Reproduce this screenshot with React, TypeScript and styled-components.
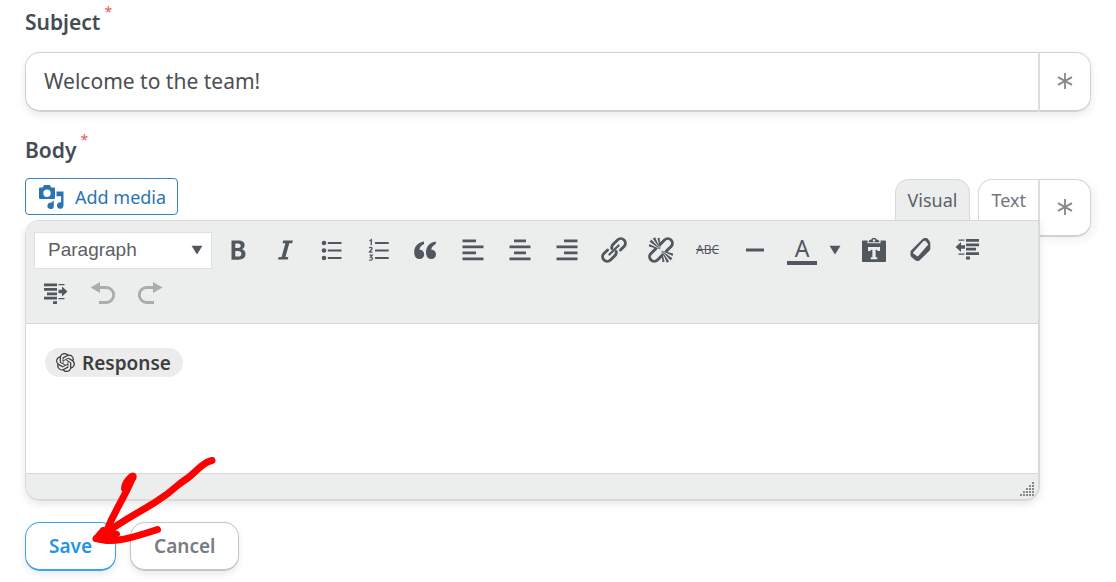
import React from "react";
import styled, { createGlobalStyle } from "styled-components";
import { SiOpenai } from "react-icons/si";

const ui = '"Noto Sans", "Open Sans", sans-serif';
const ink = "#50575e";
const line = "#d8dada";
const panel = "#eceeee";

const GlobalStyle = createGlobalStyle`
  *, *::before, *::after { box-sizing: border-box; }
  body { margin: 0; background: #fff; font-family: ${ui}; color: #454c54; }
  button, input, select { font-family: inherit; margin: 0; }
`;

const Form = styled.form`
  padding: 8px 25px 12px;
`;

const Label = styled.label`
  display: flex;
  align-items: flex-start;
  gap: 4px;
  height: 28px;
  font-size: 21px;
  line-height: 28px;
  font-weight: 600;
`;

const Required = styled.span`
  font-size: 14px;
  line-height: 8px;
  font-weight: 400;
  color: #f0555a;
`;

const SubjectField = styled.div`
  display: flex;
  height: 60px;
  margin: 16px 0 24px;
  border-radius: 15px;
  box-shadow: 0 3px 8px rgba(0, 0, 0, 0.09);
`;

const SubjectInput = styled.input`
  flex: 1;
  min-width: 0;
  padding: 0 18px 2px;
  border: 1px solid #d0d2d2;
  border-bottom-width: 2px;
  border-right: 0;
  border-radius: 15px 0 0 15px;
  background: #fff;
  color: #4b4f54;
  font-size: 21px;
  outline: 0;
`;

const TagButton = styled.button<{ $height: number }>`
  display: flex;
  align-items: center;
  justify-content: center;
  flex: none;
  width: 53px;
  height: ${(p) => p.$height}px;
  padding: 0 0 2px;
  border: 1px solid #d0d2d2;
  border-bottom-width: 2px;
  border-left: 2px solid #dcdede;
  border-radius: 0 15px 15px 0;
  background: #fff;
  color: #85878a;
`;

const BodyField = styled.div`
  display: flex;
  align-items: flex-start;
  margin-top: 14px;
`;

const EditorColumn = styled.div`
  flex: 1;
  min-width: 0;
  z-index: 1;
`;

const BodyTag = styled(TagButton)`
  margin-top: 1px;
  box-shadow: 4px 3px 8px rgba(0, 0, 0, 0.06);
`;

const EditorHead = styled.div`
  display: flex;
  align-items: flex-start;
  height: 42px;
`;

const MediaButton = styled.button`
  display: flex;
  align-items: center;
  gap: 10px;
  height: 37px;
  padding: 0 11px 0 12px;
  border: 1px solid #3582c4;
  border-radius: 4px;
  background: #fff;
  color: #2a74b5;
  font-size: 18px;
`;

const Tabs = styled.div`
  display: flex;
  align-self: flex-end;
  gap: 8px;
  margin-left: auto;
  z-index: 1;
`;

const Tab = styled.button<{ $active?: boolean }>`
  height: 41px;
  margin-bottom: ${(p) => (p.$active ? -1 : 0)}px;
  padding: 0 12px;
  border: 1px solid ${line};
  border-width: ${(p) => (p.$active ? "1px 1px 0" : "1px 0 0 1px")};
  border-radius: ${(p) => (p.$active ? "14px 14px 0 0" : "14px 0 0 0")};
  background: ${(p) => (p.$active ? panel : "#fff")};
  color: ${(p) => (p.$active ? "#5a6168" : "#70767c")};
  font-size: 18px;
`;

const Editor = styled.div`
  overflow: hidden;
  margin-right: -2px;
  border: 1px solid ${line};
  border-right-width: 2px;
  border-bottom-width: 2px;
  border-radius: 15px 0 15px 15px;
  background: #fff;
  box-shadow: 0 3px 8px rgba(0, 0, 0, 0.1);
`;

const Toolbar = styled.div`
  display: flex;
  flex-wrap: wrap;
  padding: 7px 6px 8px;
  border-bottom: 1px solid ${line};
  background: ${panel};
`;

const SelectBox = styled.div`
  display: grid;
  align-items: center;
  height: 44px;
  margin: 0 2px;
  color: ${ink};
  > * { grid-area: 1 / 1; }
  > svg { justify-self: end; margin-right: 9px; pointer-events: none; }
`;

const FormatSelect = styled.select`
  appearance: none;
  width: 178px;
  height: 37px;
  padding: 0 32px 2px 13px;
  border: 1px solid #dfe1e1;
  border-radius: 0;
  background: #fff;
  color: #5b6066;
  font-family: "Liberation Sans", sans-serif;
  font-size: 19px;
`;

const Tool = styled.button<{ $wide?: boolean }>`
  display: flex;
  align-items: center;
  justify-content: center;
  gap: 12px;
  width: ${(p) => (p.$wide ? 72 : 47)}px;
  height: 43px;
  padding: 0;
  border: 0;
  background: transparent;
  color: ${ink};
  &:disabled { color: #a9adb0; }
`;

const Content = styled.div`
  height: 149px;
  padding: 24px 19px;
  outline: 0;
`;

const Chip = styled.span`
  display: inline-flex;
  align-items: center;
  gap: 7px;
  height: 29px;
  padding: 0 12px 0 11px;
  border-radius: 15px;
  background: #ececec;
  color: #3c3e40;
  font-size: 19px;
  font-weight: 600;
`;

const StatusBar = styled.div`
  display: flex;
  align-items: flex-end;
  justify-content: flex-end;
  height: 26px;
  padding: 3px 4px;
  border-top: 1px solid ${line};
  background: ${panel};
`;

const Actions = styled.div`
  position: relative;
  z-index: 2;
  display: flex;
  gap: 14px;
  margin-top: 21px;
`;

const ActionButton = styled.button<{ $primary?: boolean }>`
  height: 49px;
  padding: 0 23px;
  border: 1px solid ${(p) => (p.$primary ? "#3ba2ee" : "#c3c5c6")};
  border-bottom-width: 2px;
  border-radius: 15px;
  background: #fff;
  box-shadow: 0 3px 7px rgba(0, 0, 0, 0.09);
  color: ${(p) => (p.$primary ? "#2295e8" : "#767c83")};
  font-size: 19px;
  font-weight: 600;
`;

const ArrowMark = styled.svg`
  position: absolute;
  left: 65px;
  top: -67px;
  pointer-events: none;
`;

const Icon = ({ children }: { children: React.ReactNode }) => (
  <svg width="30" height="30" viewBox="0 0 30 30" fill="currentColor" aria-hidden="true">
    {children}
  </svg>
);

const Asterisk = () => (
  <svg width="18" height="18" viewBox="0 0 18 18" stroke="currentColor" strokeWidth="1.8" aria-hidden="true">
    <path d="M9 1v16M2 5.1l14 7.8M16 5.1L2 12.9" />
  </svg>
);

const Caret = () => (
  <svg width="12" height="10" viewBox="0 0 12 10" fill="currentColor" aria-hidden="true">
    <path d="M.5.8h11L6 9.6z" />
  </svg>
);

const MediaIcon = () => (
  <svg width="27" height="26" viewBox="0 0 27 26" fill="currentColor" aria-hidden="true">
    <path fillRule="evenodd" d="M2 3.600h2.600L6.200 1h5.600l1.600 2.600H16a1 1 0 0 1 1 1V14a1 1 0 0 1-1 1H2a1 1 0 0 1-1-1V4.600a1 1 0 0 1 1-1zM9 5.600a3.700 3.700 0 1 0 0 7.400 3.700 3.700 0 0 0 0-7.400z" />
    <path d="M18.500 7.500H25.500V21.500a3.300 3.300 0 1 1-2.400-3.200V12.200h-4.600zM15.800 16.200v6a3.200 3.200 0 1 1-2.500-3.500z" />
  </svg>
);

const icons = {
  bold: <path fillRule="evenodd" d="M8.500 5.500h6.800c4 0 6.300 1.500 6.300 4.600 0 2.200-1.200 3.700-3 4.200 2.400.5 3.900 2 3.900 4.700 0 3.700-2.800 5.700-7 5.700h-7zM12.300 8.500v4.400h2.600c1.800 0 2.800-.7 2.800-2.200s-1-2.200-2.800-2.200zM12.300 15.900v5.700h3c2 0 3.100-1 3.100-2.900 0-1.800-1.200-2.800-3.200-2.800z" />,
  italic: <path d="M13.200 5.500h9.700l-.7 2.700h-2.900l-3.800 13.700h2.900l-.7 2.700H8l.7-2.700h2.900l3.800-13.700h-2.900z" />,
  bullets: (
    <>
      <circle cx="7" cy="8" r="2.300" /><circle cx="7" cy="15.500" r="2.300" /><circle cx="7" cy="23" r="2.300" />
      <path d="M10.800 7h13.700v2H10.800zM10.800 14.500h13.700v2H10.800zM10.800 22h13.700v2H10.800z" />
    </>
  ),
  numbers: (
    <>
      <path d="M11 7h13.700v2H11zM11 14.500h13.700v2H11zM11 22h13.700v2H11z" />
      <path fill="none" stroke="currentColor" strokeWidth="1.300" d="M5.500 6L7.300 4.800v5.400M5.400 13.200c.4-1.200 2.800-1.200 2.800.3 0 1.200-2.800 2.600-2.800 3.600h3.200M5.500 20.200h2.700l-1.600 2c2.600 0 2.400 3-.1 3-.6 0-1-.1-1.300-.3" />
    </>
  ),
  quote: (
    <path d="M13 6.500c-6 1-9.800 5-9.800 10.700 0 4.200 2 6.900 5.200 6.900 2.800 0 4.800-2 4.800-4.700s-1.900-4.600-4.700-4.600c.1-2.500 1.700-4.400 4.500-5.800zM24.800 6.500c-6 1-9.800 5-9.800 10.700 0 4.200 2 6.900 5.200 6.900 2.800 0 4.800-2 4.800-4.700s-1.900-4.600-4.700-4.600c.1-2.500 1.700-4.400 4.500-5.800z" />
  ),
  left: <path d="M4.500 4.500H18v2.800H4.500zM4.500 10.500h21v2.800h-21zM4.500 16.500H18v2.800H4.500zM4.500 22.500h21v2.800h-21z" />,
  center: <path d="M9 4.500h12v2.800H9zM4.500 10.500h21v2.800h-21zM9 16.500h12v2.800H9zM4.500 22.500h21v2.800h-21z" />,
  right: <path d="M12 4.500h13.500v2.800H12zM4.500 10.500h21v2.800h-21zM12 16.500h13.500v2.800H12zM4.500 22.500h21v2.800h-21z" />,
  link: (
    <g fill="none" stroke="currentColor" strokeWidth="2.900" strokeLinecap="round" transform="translate(15 15) rotate(-45)">
      <path d="M-.5-2.500A4.600 4.600 0 0 1 2.500-4.600H9.600a4.600 4.600 0 0 1 0 9.200H4.500" />
      <path d="M.5 2.500A4.600 4.600 0 0 1-2.500 4.600H-9.600a4.600 4.600 0 0 1 0-9.200H-4.500" />
      <path d="M-6.500 0h13" strokeWidth="2.200" />
    </g>
  ),
  unlink: (
    <>
      <g fill="none" stroke="currentColor" strokeWidth="2.900" strokeLinecap="round" transform="translate(15 15) rotate(-45)">
        <path d="M3-4.600H9.600a4.600 4.600 0 0 1 0 9.200H3" />
        <path d="M-3 4.600H-9.600a4.600 4.600 0 0 1 0-9.200H-3" />
      </g>
      <path d="M14.500 14.500L2.800 11.400l.6-2.300zM14.500 14.500L3.600 6.800l1.800-2.300zM14.500 14.500L6.800 3.600l2.300-1.400zM14.500 14.500L11.400 3.300l2.200-.6zM15.500 15.500l11.700 3.100-.6 2.300zM15.500 15.500l10.900 7.700-1.800 2.300zM15.500 15.500l7.700 10.900-2.300 1.400zM15.500 15.500l3.100 11.200-2.200.6z" />
    </>
  ),
  rule: <path d="M6 13.600h18v2.800H6z" />,
  paste: (
    <path fillRule="evenodd" d="M4 5.500h4.500v2.800h13V5.500H26a1 1 0 0 1 1 1V26a1 1 0 0 1-1 1H4a1 1 0 0 1-1-1V6.500a1 1 0 0 1 1-1zM9.500 7.200c0-2 1.300-2.500 3-2.800C12.600 3.300 13.600 3 15 3s2.400.3 2.500 1.400c1.700.3 3 .8 3 2.800zM15 4.200a1.200 1.200 0 1 0 0 2.400 1.200 1.200 0 0 0 0-2.400zM9 12v4h2.600v-1.300h1.800v7.600h-1.700v2h6.600v-2h-1.700v-7.600h1.800V16H21v-4z" />
  ),
  eraser: (
    <path fillRule="evenodd" d="M16.300 4.300C17.200 3.400 18.400 3 19.600 3c1.200 0 2 .4 2.600 1.200l1.500 2.200c.5.6.6 1.200.6 2v5.200c0 .9-.3 1.600-.9 2.200L14 25c-.7.8-1.500 1-2.500 1s-1.800-.3-2.500-.9l-3.600-3c-.6-.5-.9-1.200-.9-2v-3c0-.8.3-1.300.8-1.800zM17.200 6.300L7.300 17.200c-.4.4-.4.8 0 1.200l3.600 2.600c.5.4 1 .3 1.400-.1L21.800 10c.4-.4.4-.9.1-1.300L19.800 6.200c-.7-.7-1.900-.6-2.600.1z" />
  ),
  outdent: (
    <path d="M13 4h13v2.800H13zM13 8.400h13v2.800H13zM13 12.800h10v2.800H13zM13 17.200h13V20H13zM13 21.600h4v2.800h-4zM5.500 4.500h6v1.200h-6zM5.500 18.500h6v1.200h-6zM2.500 12l5.500-5v3.200h4v3.600H8V17z" />
  ),
  indent: (
    <path d="M3 4.500h13v2.800H3zM3 9h13v2.800H3zM6 13.400h10v2.800H6zM3 17.800h13v2.800H3zM12 22.200h4V25h-4zM17.500 5h6v1.200h-6zM17.500 19h6v1.200h-6zM26.500 12.500l-5.500-5v3.200h-3.500v3.600H21v3.300z" />
  ),
  undo: (
    <>
      <path d="M2.500 8.500L12 3v11z" />
      <path d="M11 8.500h7.500a7.200 7.500 0 0 1 0 15H11" fill="none" stroke="currentColor" strokeWidth="2.800" />
    </>
  ),
  redo: (
    <>
      <path d="M27.500 8.500L18 3v11z" />
      <path d="M19 8.500h-7.500a7.200 7.500 0 0 0 0 15H19" fill="none" stroke="currentColor" strokeWidth="2.800" />
    </>
  ),
};

const Strike = styled.span`
  font-size: 12px;
  line-height: 16px;
  text-decoration: line-through;
`;

const ColorLetter = styled.span`
  width: 30px;
  height: 30px;
  border-bottom: 4px solid ${ink};
  font-size: 23px;
  line-height: 26px;
`;

const gripDots = [0, 1, 2, 3, 4].flatMap((col) =>
  Array.from({ length: col + 1 }, (_, row) => ({ x: col * 3, y: 12 - row * 3 }))
);

type ToolName = keyof typeof icons;
const leading: [ToolName, string][] = [
  ["bold", "Bold"], ["italic", "Italic"], ["bullets", "Bulleted list"], ["numbers", "Numbered list"],
  ["quote", "Blockquote"], ["left", "Align left"], ["center", "Align center"], ["right", "Align right"],
  ["link", "Insert link"], ["unlink", "Remove link"],
];
const trailing: [ToolName, string][] = [
  ["paste", "Paste as text"], ["eraser", "Clear formatting"], ["outdent", "Decrease indent"],
  ["indent", "Increase indent"], ["undo", "Undo"], ["redo", "Redo"],
];

const renderTool = ([name, title]: [ToolName, string]) => (
  <Tool key={name} type="button" aria-label={title} disabled={name === "undo" || name === "redo"}>
    <Icon>{icons[name]}</Icon>
  </Tool>
);

export default function App() {
  return (
    <>
      <GlobalStyle />
      <Form onSubmit={(e) => e.preventDefault()}>
        <Label htmlFor="subject">Subject<Required>*</Required></Label>
        <SubjectField>
          <SubjectInput id="subject" type="text" defaultValue="Welcome to the team!" />
          <TagButton type="button" $height={60} aria-label="Insert subject tag"><Asterisk /></TagButton>
        </SubjectField>

        <Label as="div" id="body-label">Body<Required>*</Required></Label>
        <BodyField>
          <EditorColumn>
            <EditorHead>
              <MediaButton type="button"><MediaIcon />Add media</MediaButton>
              <Tabs>
                <Tab type="button" $active>Visual</Tab>
                <Tab type="button">Text</Tab>
              </Tabs>
            </EditorHead>
            <Editor>
              <Toolbar>
                <SelectBox>
                  <FormatSelect aria-label="Text format" defaultValue="Paragraph">
                    <option>Paragraph</option>
                  </FormatSelect>
                  <Caret />
                </SelectBox>
                {leading.map(renderTool)}
                <Tool type="button" aria-label="Strikethrough"><Strike>ABC</Strike></Tool>
                {renderTool(["rule", "Horizontal line"])}
                <Tool type="button" $wide aria-label="Text color">
                  <ColorLetter>A</ColorLetter>
                  <Caret />
                </Tool>
                {trailing.map(renderTool)}
              </Toolbar>
              <Content role="textbox" aria-labelledby="body-label">
                <Chip><SiOpenai size={19} />Response</Chip>
              </Content>
              <StatusBar>
                <svg width="14" height="14" viewBox="0 0 14 14" fill="#85898c" aria-hidden="true">
                  {gripDots.map((d) => <rect key={`${d.x}-${d.y}`} x={d.x} y={d.y} width="2" height="2" />)}
                </svg>
              </StatusBar>
            </Editor>
          </EditorColumn>
          <BodyTag type="button" $height={58} aria-label="Insert body tag"><Asterisk /></BodyTag>
        </BodyField>

        <Actions>
          <ActionButton type="submit" $primary>Save</ActionButton>
          <ActionButton type="button">Cancel</ActionButton>
          <ArrowMark
            width="130"
            height="94"
            viewBox="90 455 130 94"
            fill="none"
            stroke="#fe0000"
            strokeLinecap="round"
            strokeLinejoin="round"
            aria-hidden="true"
          >
            <path strokeWidth="7" d="M212 460.500c-6 1-10 5-15 9.500-7 7-10 9-17 13.500-10 9-17 14-26 19.500-16 10-32 18-48 30" />
            <path strokeWidth="7" d="M133 476c-5 15-11 22-18 37-5 9-8 16-10 25" />
            <path strokeWidth="9" d="M132 477.500c-4 4-6 6-6.500 11" />
            <path strokeWidth="7" d="M96 538.500c20 5 35-1 49-5l12.500-4" />
            <path strokeWidth="6" fill="#fe0000" d="M103 530l-7 8.500 12 2.500 9-7z" />
          </ArrowMark>
        </Actions>
      </Form>
    </>
  );
}
